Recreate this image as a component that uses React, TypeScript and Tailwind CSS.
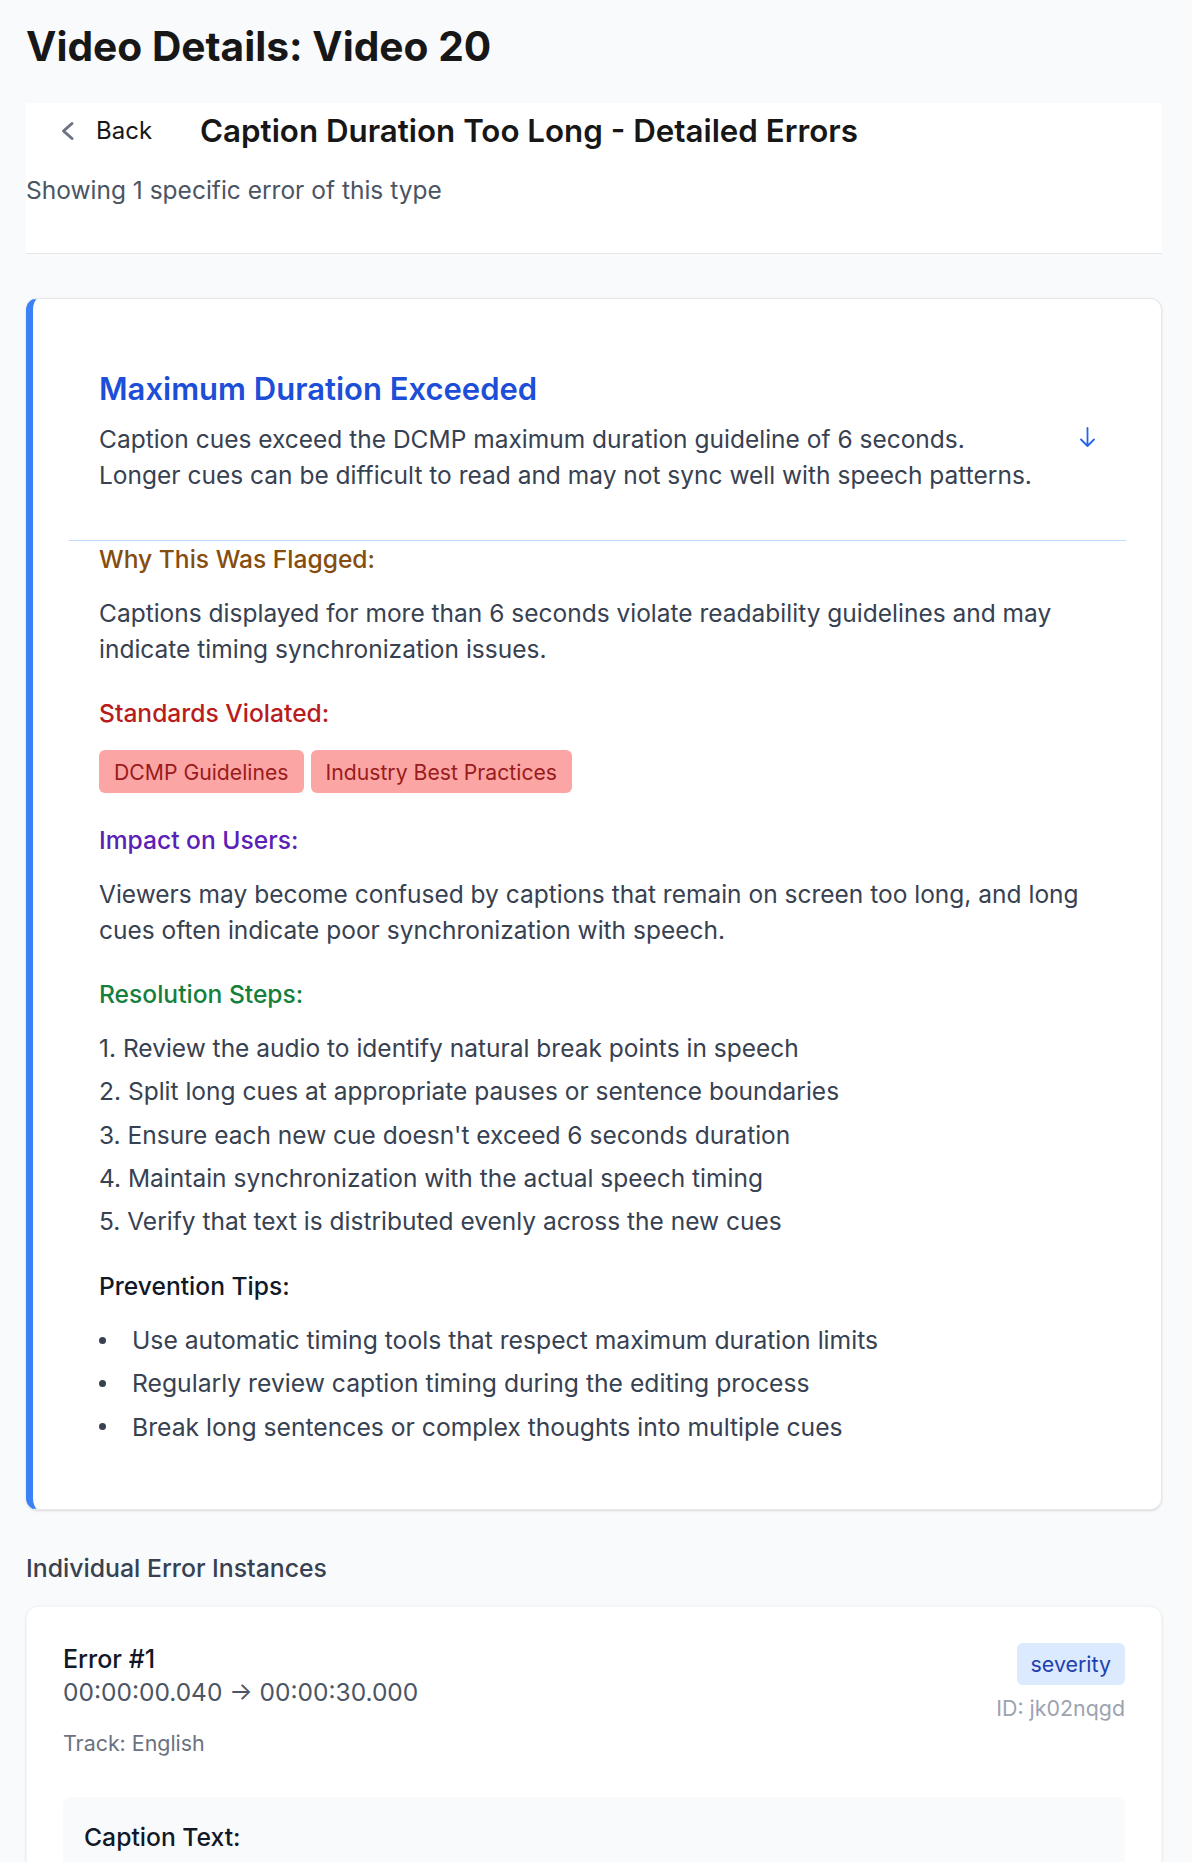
import React from 'react';

const steps = [
  'Review the audio to identify natural break points in speech',
  'Split long cues at appropriate pauses or sentence boundaries',
  "Ensure each new cue doesn't exceed 6 seconds duration",
  'Maintain synchronization with the actual speech timing',
  'Verify that text is distributed evenly across the new cues',
];

const tips = [
  'Use automatic timing tools that respect maximum duration limits',
  'Regularly review caption timing during the editing process',
  'Break long sentences or complex thoughts into multiple cues',
];

const standards = ['DCMP Guidelines', 'Industry Best Practices'];

function ChevronLeft() {
  return (
    <svg width="16" height="20" viewBox="0 0 16 20" fill="none" className="text-[#6b7280] shrink-0">
      <path d="M12 2.5 L3.5 10 L12 17.5" stroke="currentColor" strokeWidth="3" strokeLinecap="round" strokeLinejoin="round" />
    </svg>
  );
}

function ArrowDown() {
  return (
    <svg width="17" height="20" viewBox="0 0 17 20" fill="none" className="text-[#2563eb] shrink-0">
      <path d="M8.5 1 V19 M2 12.5 L8.5 19 L15 12.5" stroke="currentColor" strokeWidth="1.8" strokeLinecap="round" strokeLinejoin="round" />
    </svg>
  );
}

function SectionHeading({ className, children }: { className: string; children: React.ReactNode }) {
  return <h4 className={`text-[24.6px] leading-[36px] font-medium ${className}`}>{children}</h4>;
}

export default function App() {
  return (
    <div className="min-h-screen bg-[#f9fafb] pl-[26px] pr-[30px] pt-[22px] pb-16 font-['Inter',sans-serif] text-[#374151]">
      <h1 className="text-[40.7px] leading-[50px] font-bold text-neutral-900">Video Details: Video 20</h1>

      {/* header bar */}
      <div className="mt-[31px] bg-white pt-[8px] pb-[44px] border-b border-[#e5e7eb]">
        <div className="flex h-[40px] items-center pl-[34px]">
          <button className="flex items-center text-neutral-900">
            <ChevronLeft />
            <span className="ml-[20px] text-[24px] leading-[36px]">Back</span>
          </button>
          <h2 className="ml-[48px] text-[31.3px] leading-[40px] font-semibold text-neutral-900">
            Caption Duration Too Long - Detailed Errors
          </h2>
        </div>
        <p className="mt-[20px] text-[24.5px] leading-[38px] text-[#4b5563]">Showing 1 specific error of this type</p>
      </div>

      {/* explanation card */}
      <div className="mt-[44px] bg-white rounded-xl border border-[#e5e7eb] border-l-[7px] border-l-[#3b82f6] shadow-sm pt-[36px] pb-[36px] pl-[36px] pr-[35px]">
        <div className="flex items-center justify-between pt-[34px] px-[30px] pb-[47px]">
          <div>
            <h3 className="text-[31px] leading-[40px] font-semibold text-[#1d4ed8]">Maximum Duration Exceeded</h3>
            <p className="mt-[12px] text-[24.5px] leading-[36px]">
              Caption cues exceed the DCMP maximum duration guideline of 6 seconds.
              <br />
              Longer cues can be difficult to read and may not sync well with speech patterns.
            </p>
          </div>
          <div className="mt-[12px]">
            <ArrowDown />
          </div>
        </div>

        <div className="border-t border-[#bfdbfe] px-[30px] pb-[28px]">
          <SectionHeading className="text-[#854d0e]">Why This Was Flagged:</SectionHeading>
          <p className="mt-[18px] text-[24.5px] leading-[36px]">
            Captions displayed for more than 6 seconds violate readability guidelines and may
            <br />
            indicate timing synchronization issues.
          </p>

          <SectionHeading className="mt-[28px] text-[#b91c1c]">Standards Violated:</SectionHeading>
          <div className="mt-[19px] flex gap-[7px]">
            {standards.map((s) => (
              <span key={s} className="rounded-md bg-[#fca5a5] px-[15px] py-[6.5px] text-[21.2px] leading-[30px] text-[#991b1b]">
                {s}
              </span>
            ))}
          </div>

          <SectionHeading className="mt-[29px] text-[#5b21b6]">Impact on Users:</SectionHeading>
          <p className="mt-[18px] text-[24.5px] leading-[36px]">
            Viewers may become confused by captions that remain on screen too long, and long
            <br />
            cues often indicate poor synchronization with speech.
          </p>

          <SectionHeading className="mt-[28px] text-[#15803d]">Resolution Steps:</SectionHeading>
          <ol className="mt-[18px] flex flex-col gap-[7.3px] text-[24.5px] leading-[36px]">
            {steps.map((s, i) => (
              <li key={i}>
                {i + 1}. {s}
              </li>
            ))}
          </ol>

          <SectionHeading className="mt-[29px] text-[#111827]">Prevention Tips:</SectionHeading>
          <ul className="mt-[18px] flex flex-col gap-[7.3px] text-[24.7px] leading-[36px]">
            {tips.map((t) => (
              <li key={t} className="flex items-center">
                <span className="h-[7px] w-[7px] shrink-0 rounded-full bg-[#374151]" />
                <span className="ml-[26px]">{t}</span>
              </li>
            ))}
          </ul>
        </div>
      </div>

      {/* instances */}
      <h3 className="mt-[40px] text-[24.8px] leading-[36px] font-medium text-[#374151]">Individual Error Instances</h3>

      <div className="mt-[20px] bg-white rounded-xl border border-[#f3f4f6] shadow-sm p-[36px]">
        <div className="flex items-start justify-between">
          <div>
            <div className="text-[25px] leading-[32px] font-medium text-[#111827]">Error #1</div>
            <div className="text-[24.5px] leading-[35px] text-[#4b5563]">00:00:00.040 → 00:00:30.000</div>
            <div className="mt-[18px] text-[21.4px] leading-[30px] text-[#6b7280]">Track: English</div>
          </div>
          <div className="flex flex-col items-end">
            <span className="rounded-md bg-[#dbeafe] px-[14px] py-[6px] text-[21.4px] leading-[30px] text-[#1e40af]">severity</span>
            <span className="mt-[8px] text-[21.4px] leading-[30px] text-[#9ca3af]">ID: jk02nqgd</span>
          </div>
        </div>

        <div className="mt-[39px] rounded-lg bg-[#f9fafb] px-[21px] pt-[22px] pb-[24px]">
          <div className="text-[24.7px] leading-[36px] font-medium text-[#111827]">Caption Text:</div>
        </div>
      </div>
    </div>
  );
}
